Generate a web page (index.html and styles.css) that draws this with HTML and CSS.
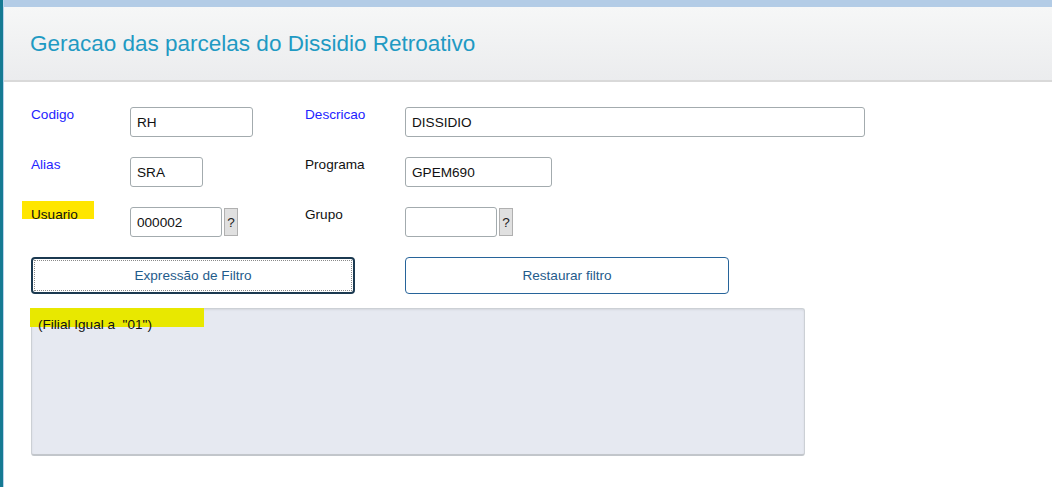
FILE: index.html
```
<!DOCTYPE html>
<html lang="pt">

<head>
    <meta charset="UTF-8">
    <title>Geracao das parcelas do Dissidio Retroativo</title>
    <link rel="stylesheet" href="styles.css">
</head>

<body>
    <div class="side_bar"></div>

    <div class="page">
        <div class="top_strip"></div>
        <div class="header">
            <h1>Geracao das parcelas do Dissidio Retroativo</h1>
        </div>

        <div class="form">
            <div class="row">
                <label class="req">Codigo</label>
                <div class="field"><input type="text" class="w120" value="RH"></div>
                <label class="req">Descricao</label>
                <div class="field"><input type="text" class="w458" value="DISSIDIO"></div>
            </div>
            <div class="row">
                <label class="req">Alias</label>
                <div class="field"><input type="text" class="w70" value="SRA"></div>
                <label>Programa</label>
                <div class="field"><input type="text" class="w145" value="GPEM690"></div>
            </div>
            <div class="row">
                <label class="marked"><span class="hl"></span><span class="txt">Usuario</span></label>
                <div class="field">
                    <input type="text" class="w90" value="000002">
                    <button class="ask">?</button>
                </div>
                <label>Grupo</label>
                <div class="field">
                    <input type="text" class="w90" value="">
                    <button class="ask">?</button>
                </div>
            </div>

            <div class="btn_row">
                <button class="btn focus"><span>Expressão de Filtro</span></button>
                <button class="btn">Restaurar filtro</button>
            </div>

            <div class="filter_box">
                <span class="hl"></span>
                <span class="txt">(Filial Igual a &nbsp;"01")</span>
            </div>
        </div>
    </div>
</body>

</html>
```

FILE: styles.css
```
* {
    padding: 0;
    margin: 0;
    box-sizing: border-box;
}

body {
    display: flex;
    height: 487px;
    overflow: hidden;
    background-color: #fff;
    font-family: Arial, "Liberation Sans", sans-serif;
    font-size: 13.6px;
    color: #111;
}

/* barra azul escura da esquerda + linha clara */
.side_bar {
    width: 4px;
    background-color: #157a93;
    border-right: 1px solid #b9d3ec;
    flex-shrink: 0;
}

.page {
    flex: 1;
}

.top_strip {
    height: 7px;
    background-color: #b3cce6;
}

.header {
    height: 75px;
    background: linear-gradient(#f6f7f7, #ebecee);
    border-bottom: 2px solid #d9d9d9;
    padding: 24px 0 0 26px;
}

.header h1 {
    font-weight: normal;
    font-size: 22.5px;
    color: #1f9ac3;
}

.form {
    padding: 25px 0 0 27px;
}

.row {
    display: flex;
    height: 30px;
    margin-bottom: 20px;
}

.row label {
    width: 99px;
    line-height: 15px;
    position: relative;
}

.row label.req {
    color: #2323ff;
}

.field {
    width: 175px;
    display: flex;
    gap: 2px;
}

.row .field:last-child {
    width: auto;
}

.row label:nth-of-type(2) {
    width: 100px;
}

input {
    height: 30px;
    border: 1px solid #a3abae;
    border-radius: 3px;
    padding: 0 6px;
    font-family: inherit;
    font-size: 13.6px;
    color: #111;
    background-color: #fff;
}

.w70 { width: 73px; }
.w90 { width: 92px; }
.w120 { width: 123px; }
.w145 { width: 147px; }
.w458 { width: 460px; }

.ask {
    width: 14px;
    height: 28px;
    margin-top: 1px;
    background-color: #e0e0e0;
    border: 1px solid #b0b0b0;
    font-family: inherit;
    font-size: 13.6px;
    color: #222;
}

/* marca amarela por cima do print */
.hl {
    position: absolute;
    background-color: #ffe600;
}

.txt {
    position: relative;
}

.marked .hl {
    left: -9px;
    top: -6px;
    width: 72px;
    height: 18px;
}

.btn_row {
    display: flex;
    gap: 50px;
    margin-bottom: 14px;
}

.btn {
    width: 324px;
    height: 37px;
    background-color: #fff;
    border: 1px solid #27649a;
    border-radius: 4px;
    font-family: inherit;
    font-size: 13.6px;
    color: #1f5c8c;
}

.btn.focus {
    border: 2px solid #1b3950;
    padding: 1px;
}

.btn.focus span {
    display: flex;
    align-items: center;
    justify-content: center;
    height: 100%;
    border: 1px dotted #8a8a8a;
}

.filter_box {
    position: relative;
    width: 774px;
    height: 148px;
    background-color: #e6e9f1;
    border: 1px solid #ccd0d5;
    border-bottom: 2px solid #c2c6cb;
    border-radius: 3px;
    box-shadow: inset 0 1px 2px rgba(0, 0, 0, .08);
    padding: 8px 6px;
}

.filter_box .hl {
    left: -2px;
    top: -1px;
    width: 174px;
    height: 19px;
    background-color: #e8e800;
}
```
